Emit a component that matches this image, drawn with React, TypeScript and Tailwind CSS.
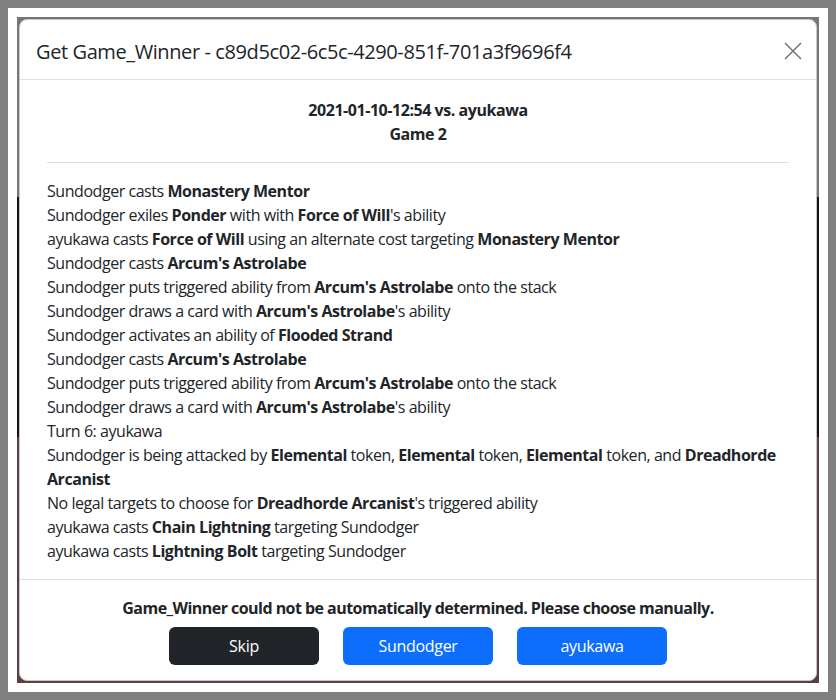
import React from "react";

type Part = string | { b: string };

const log: Part[][] = [
  ["Sundodger casts ", { b: "Monastery Mentor" }],
  ["Sundodger exiles ", { b: "Ponder" }, " with with ", { b: "Force of Will" }, "'s ability"],
  ["ayukawa casts ", { b: "Force of Will" }, " using an alternate cost targeting ", { b: "Monastery Mentor" }],
  ["Sundodger casts ", { b: "Arcum's Astrolabe" }],
  ["Sundodger puts triggered ability from ", { b: "Arcum's Astrolabe" }, " onto the stack"],
  ["Sundodger draws a card with ", { b: "Arcum's Astrolabe" }, "'s ability"],
  ["Sundodger activates an ability of ", { b: "Flooded Strand" }],
  ["Sundodger casts ", { b: "Arcum's Astrolabe" }],
  ["Sundodger puts triggered ability from ", { b: "Arcum's Astrolabe" }, " onto the stack"],
  ["Sundodger draws a card with ", { b: "Arcum's Astrolabe" }, "'s ability"],
  ["Turn 6: ayukawa"],
  [
    "Sundodger is being attacked by ",
    { b: "Elemental" },
    " token, ",
    { b: "Elemental" },
    " token, ",
    { b: "Elemental" },
    " token, and ",
    { b: "Dreadhorde Arcanist" },
  ],
  ["No legal targets to choose for ", { b: "Dreadhorde Arcanist" }, "'s triggered ability"],
  ["ayukawa casts ", { b: "Chain Lightning" }, " targeting Sundodger"],
  ["ayukawa casts ", { b: "Lightning Bolt" }, " targeting Sundodger"],
];

function CloseIcon() {
  return (
    <svg width="18" height="18" viewBox="0 0 18 18" fill="none">
      <path d="M1 1L17 17M17 1L1 17" stroke="#737373" strokeWidth="1.5" />
    </svg>
  );
}

export default function App() {
  const players = ["Sundodger", "ayukawa"];

  return (
    <div
      className="h-[700px] w-[836px] bg-[#808080] p-2 text-[#212529]"
      style={{ fontFamily: '"Open Sans", "Noto Sans", sans-serif' }}
    >
      <div className="h-full w-full bg-white p-[9px]">
        <div className="h-full w-full bg-[linear-gradient(#777_0,#777_180px,#151515_180px,#151515_420px,#5a4040_420px)] p-[2px]">
          <div className="flex h-full flex-col rounded-lg border border-[#c8c8c8] bg-white">
            <div className="flex h-[62px] items-center justify-between border-b border-[#dee2e6] px-4">
              <h5 className="mt-[4px] text-[20px] leading-[30px] tracking-[-0.4px]">
                Get Game_Winner - c89d5c02-6c5c-4290-851f-701a3f9696f4
              </h5>
              <button className="mt-[2px] mr-[-9px] flex h-8 w-8 items-center justify-center">
                <CloseIcon />
              </button>
            </div>

            <div className="flex-1 px-[27px] pt-[18px] pb-4 text-[16px] leading-6 tracking-[-0.45px]">
              <div className="text-center font-bold">
                <div>2021-01-10-12:54 vs. ayukawa</div>
                <div>Game 2</div>
              </div>
              <hr className="mt-4 mb-4 border-t border-[#dedede]" />
              <div>
                {log.map((line, i) => (
                  <div key={i}>
                    {line.map((p, j) =>
                      typeof p === "string" ? (
                        <span key={j}>{p}</span>
                      ) : (
                        <b key={j} className="font-bold">
                          {p.b}
                        </b>
                      )
                    )}
                  </div>
                ))}
              </div>
            </div>

            <div className="flex flex-col items-center border-t border-[#dee2e6] px-4 pt-4 pb-[15px]">
              <p className="text-[16px] leading-6 font-bold tracking-[-0.54px]">
                Game_Winner could not be automatically determined. Please choose manually.
              </p>
              <div className="mt-[7px] flex gap-6">
                <button className="h-[38px] w-[150px] rounded-md bg-[#212529] text-[16px] tracking-[-0.3px] text-white">
                  Skip
                </button>
                {players.map((p) => (
                  <button
                    key={p}
                    className="h-[38px] w-[150px] rounded-md bg-[#0d6efd] text-[16px] tracking-[-0.3px] text-white"
                  >
                    {p}
                  </button>
                ))}
              </div>
            </div>
          </div>
        </div>
      </div>
    </div>
  );
}
